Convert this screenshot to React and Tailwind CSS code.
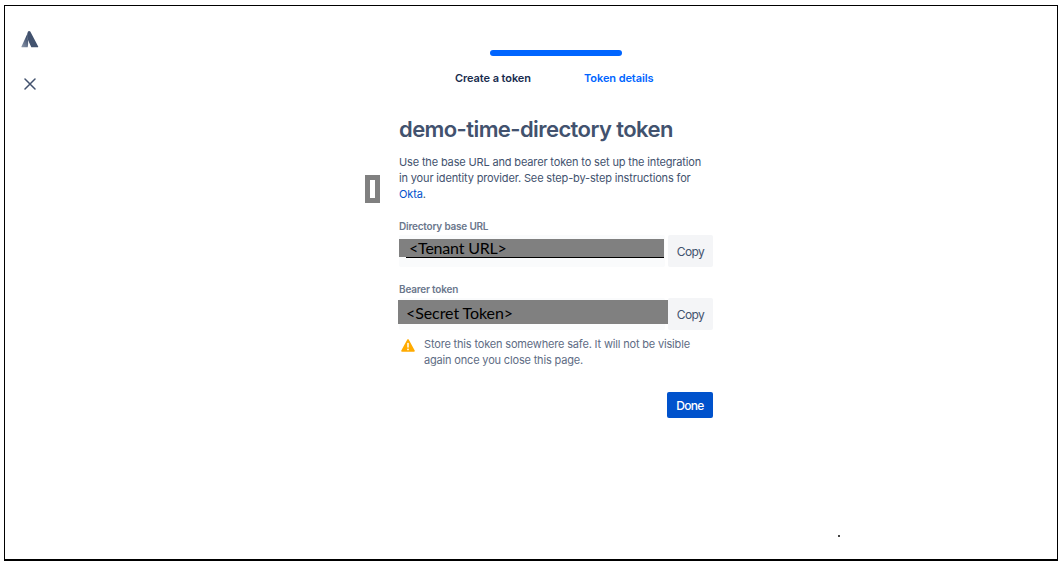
function BrandMark() {
  return (
    <svg width="18" height="18" viewBox="0 0 18 18" className="block">
      <defs>
        <linearGradient id="fold" x1="0.9" y1="0.1" x2="0.3" y2="1">
          <stop offset="0" stopColor="#344563" />
          <stop offset="1" stopColor="#8490a5" />
        </linearGradient>
      </defs>
      <path d="M6.100 4.300C6.300 8 8 11.500 6.700 17.300H1c-.5 0-.7-.4-.5-.8Z" fill="url(#fold)" />
      <path d="M7 1.600c.5-.9 1.700-.9 2.300 0l7.900 14.900c.2.400 0 .8-.5.800h-6.400L7 10C5.700 7.300 5.800 4 7 1.600Z" fill="#42526e" />
    </svg>
  );
}

function CopyButton() {
  return (
    <button className="h-8 w-[45px] rounded-[2px] bg-[#f4f5f7] pt-[2px] text-[12px] tracking-[-0.55px] text-[#42526e]">Copy</button>
  );
}

export default function App() {
  return (
    <div className="h-[565px] w-[1063px] bg-white pt-[5px] pl-1 font-['Inter','Liberation_Sans',sans-serif]">
      <div className="relative flex h-[556px] w-[1054px] border border-b-2 border-black">
        <nav className="flex w-[394px] flex-col pt-6 pl-4">
          <BrandMark />
          <svg width="12" height="12" viewBox="0 0 12 12" className="mt-[30px] ml-[3px] block">
            <path d="M1 1l10 10M11 1L1 11" stroke="#42526e" strokeWidth="1.5" strokeLinecap="round" />
          </svg>
        </nav>

        <main className="w-[314px] pt-11">
          <div className="ml-[91px] h-[6px] w-[132px] rounded-full bg-[#0065ff]" />
          <div className="mt-[14px] flex h-4 pl-[56px] text-[11px] leading-4 font-semibold tracking-[-0.08px] whitespace-nowrap">
            <span className="w-[129px] text-[#172b4d]">Create a token</span>
            <span className="text-[#0065ff]">Token details</span>
          </div>

          <h1 className="mt-[29px] h-7 text-[22px] leading-7 font-semibold tracking-[-0.58px] whitespace-nowrap text-[#42526e]">
            demo-time-directory token
          </h1>
          <p className="mt-[11px] text-[11px] leading-4 tracking-[-0.15px] whitespace-nowrap text-[#42526e]">
            Use the base URL and bearer token to set up the integration
            <br />
            in your identity provider. See step-by-step instructions for
            <br />
            <span className="text-[#0052cc]">Okta</span>.
          </p>

          <label className="mt-4 block h-4 text-[10px] leading-4 font-semibold tracking-[-0.2px] text-[#6b778c]">
            Directory base URL
          </label>
          <div className="mt-px flex h-8 gap-[3px]">
            <div className="h-8 w-[266px] rounded-[2px] bg-[#fafbfc] pt-1">
              <div className="h-[18px] w-[265px] bg-[#808080] pl-[10px] font-['Lato',sans-serif] text-[16px] leading-[17px] tracking-[-0.2px] text-black">
                &lt;Tenant URL&gt;
              </div>
              <div className="ml-[7px] h-px w-[258px] bg-black" />
            </div>
            <CopyButton />
          </div>

          <label className="mt-[14px] block h-4 text-[10px] leading-4 font-semibold tracking-[-0.2px] text-[#6b778c]">
            Bearer token
          </label>
          <div className="mt-px flex h-8 gap-[3px]">
            <div className="h-8 w-[266px] rounded-[2px] bg-[#fafbfc] pt-[2px]">
              <div className="-ml-px h-6 w-[270px] bg-[#808080] pl-2 font-['Lato',sans-serif] text-[16px] leading-[26px] tracking-[-0.08px] text-black">
                &lt;Secret Token&gt;
              </div>
            </div>
            <CopyButton />
          </div>

          <div className="mt-[6px] flex text-[11px] leading-4 tracking-[-0.17px] whitespace-nowrap text-[#5e6c84]">
            <svg width="14" height="13" viewBox="0 0 14 13" className="mt-[3px] mr-[9px] ml-[2px] block">
              <path d="M6.300.600c.3-.6 1.100-.6 1.400 0l6 11c.3.600 0 1.200-.6 1.200H.9c-.6 0-.9-.6-.6-1.200Z" fill="#ffab00" />
              <path d="M7 4.400v3.500" stroke="#fff" strokeWidth="1.500" strokeLinecap="round" />
              <circle cx="7" cy="10.400" r=".85" fill="#fff" />
            </svg>
            <p>
              Store this token somewhere safe. It will not be visible
              <br />
              again once you close this page.
            </p>
          </div>

          <div className="mt-6 flex justify-end">
            <button className="h-[26px] w-[46px] rounded-[2px] bg-[#0052cc] pt-[2px] text-[12px] font-medium tracking-[-0.7px] text-white">
              Done
            </button>
          </div>
        </main>

        <div className="absolute top-[169px] left-[360px] h-7 w-[15px] border-[5px] border-[#808080] bg-white" />
        <div className="absolute top-[529px] left-[833px] size-[2px] bg-[#444]" />
      </div>
    </div>
  );
}
